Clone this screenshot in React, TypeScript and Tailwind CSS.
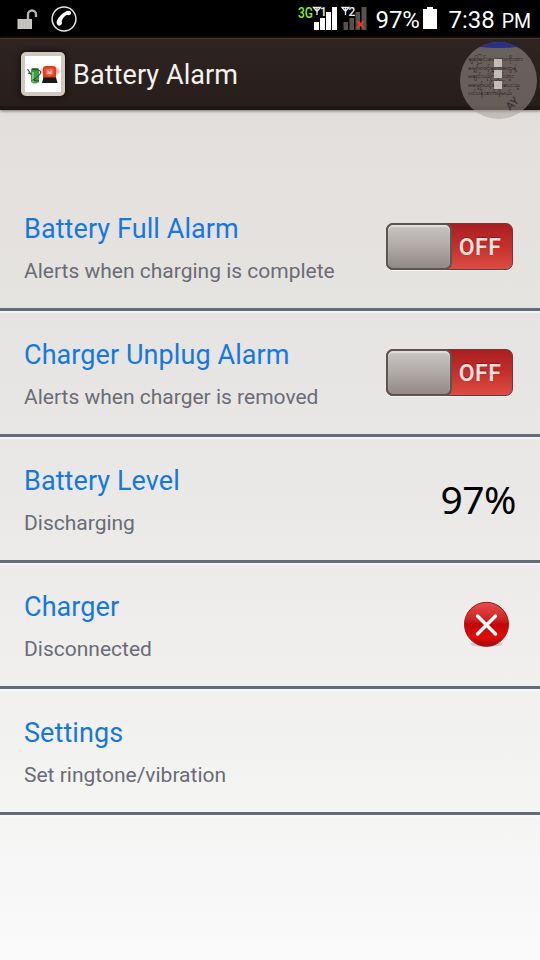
import React from "react";

interface RowProps {
  title: string;
  subtitle: string;
  children?: React.ReactNode;
}

function Row({ title, subtitle, children }: RowProps) {
  return (
    <div className="flex h-[126px] justify-between border-b-[3px] border-[#666b77] pr-[27px] pl-6 shadow-[0_2px_0_rgba(245,249,252,0.75)]">
      <div className="pt-7 whitespace-nowrap">
        <h2 className="text-[27px] leading-8 tracking-[0.08px] text-[#1678df]">{title}</h2>
        <p className="mt-[14px] text-[21px] leading-[25px] text-[#6a6c76]">
          {subtitle}
        </p>
      </div>
      {children}
    </div>
  );
}

function OffSwitch() {
  return (
    <button className="mt-[38px] flex h-[47px] w-[127px] rounded-[7px] border border-[#7c3433] bg-linear-to-b from-[#a91f20] via-[#c52f2d] to-[#dc4c44] shadow-[0_1px_0_#f8f6f4]">
      <span className="-mt-px -ml-px h-[47px] w-[66px] rounded-[7px] border-2 border-[#5b5451] bg-linear-to-b from-[#c9c5c3] via-[#b0aaa7] to-[#918a86] shadow-[inset_0_2px_1px_#e2dfdd]" />
      <span className="flex-1 pr-1 text-center text-[23px] leading-[47px] font-semibold tracking-[0.5px] text-[#f5dfda] [text-shadow:0_-1px_1px_#8c1a19]">
        OFF
      </span>
    </button>
  );
}

function UnlockIcon() {
  return (
    <svg width="21" height="21" viewBox="0 0 21 21">
      <path d="M11 11V5.500a4 4 0 0 1 8 0V8" fill="none" stroke="#b5b3b0" strokeWidth="2.400" />
      <rect x="0.500" y="10" width="14.500" height="10" fill="#c8c6c3" />
      <path d="M3 11v8M6 11v8M9 11v8M12 11v8" stroke="#b5b3b0" strokeWidth="0.700" />
    </svg>
  );
}

function PhoneIcon() {
  return (
    <svg width="26" height="26" viewBox="0 0 26 26">
      <circle cx="13" cy="13" r="11.900" fill="none" stroke="#e4e4e4" strokeWidth="1.500" />
      <path
        d="M14.500 5.700c1.500-1.500 4.600-1.400 5.500.4.700 1.600-.7 3.300-2.400 3.100-.8-.1-1.200-.5-2-.1-2 1.100-4.300 3.700-4.900 5.800-.2.800.4 1.200.3 2.100-.2 1.900-2.300 3.300-4 2.300-1.600-1-1.700-3.300-.8-5.200 1.700-3.500 5-6.900 8.300-8.400z"
        fill="#fff"
      />
    </svg>
  );
}

function SignalIcons() {
  return (
    <svg width="70" height="26" viewBox="0 0 70 26">
      <g fontFamily="Roboto, sans-serif" fontWeight="500">
        <text x="0" y="14" fill="#8eea2c" fontSize="14" textLength="15" lengthAdjust="spacingAndGlyphs">3G</text>
        <g fill="none" stroke="#eee" strokeWidth="1.300">
          <path d="M15.500 3.500h7l-3.500 4zM19 3v8" />
          <path d="M44 3.500h7l-3.500 4zM47.500 3v8" />
        </g>
        <text x="22" y="11.500" fill="#eee" fontSize="12">1</text>
        <path d="M16 18h5v8h-5zM22 14h5v12h-5zM28 8h5v18h-5zM34 3h5v23h-5z" fill="#fff" />
        <path d="M45.500 18h4.500v8h-4.500zM51.500 14h4.500v12h-4.500zM57.500 8h4.500v18h-4.500zM63.500 3h5v23h-5z" fill="#59504d" />
        <text x="50.500" y="11.500" fill="#eee" fontSize="12">2</text>
        <path d="m59 17 7 7m0-7-7 7" stroke="#e23a20" strokeWidth="1.900" />
      </g>
    </svg>
  );
}

function AppIcon() {
  return (
    <div className="flex h-11 w-11 items-center justify-center rounded-[5px] bg-[#d3c8bf] shadow-[0_0_4px_2px_#1a1411]">
      <svg className="h-9 w-9 bg-white" viewBox="0 0 36 36">
        <defs>
          <radialGradient id="glow">
            <stop offset="0.3" stopColor="#f03a20" stopOpacity="0.9" />
            <stop offset="1" stopColor="#f03a20" stopOpacity="0" />
          </radialGradient>
        </defs>
        <ellipse cx="25" cy="15" rx="11" ry="6" fill="url(#glow)" />
        <path d="M6 14q0-2 2-2h4q2 0 2 2v12q-4 3-8 0z" fill="#3d9f42" />
        <path d="M8 16v10" stroke="#91dc8e" strokeWidth="1.500" />
        <path d="M7 13.500h6" stroke="#176326" strokeWidth="1.500" />
        <path d="m2.500 13 4 6M3 17l3 1M13 14q4 1 2 4t-7 6l6 1" fill="none" stroke="#3d4b3f" strokeWidth="1.200" />
        <path d="M18 23v-10q0-3 3-3h7q3 0 3 3v10z" fill="#dc3e24" />
        <path d="M20.500 12.500h8v6l-4 2-4-2z" fill="#f0674b" />
        <path d="m22.500 14 2 2 2-2v4h-4z" fill="#ffc2aa" />
        <path d="m18.500 21.500h12.500l1.500 5.500H17z" fill="#1b1817" />
      </svg>
    </div>
  );
}

function ErrorIcon() {
  return (
    <svg className="mt-[37px] mr-px" width="50" height="50" viewBox="0 0 50 50">
      <defs>
        <linearGradient id="red" x2="0" y2="1">
          <stop offset="0" stopColor="#e5504d" />
          <stop offset="0.4" stopColor="#cf2020" />
          <stop offset="0.5" stopColor="#c20608" />
          <stop offset="0.8" stopColor="#e00b0c" />
          <stop offset="1" stopColor="#9b0909" />
        </linearGradient>
      </defs>
      <ellipse cx="24.500" cy="44" rx="16" ry="3" fill="#bdb5b1" opacity="0.6" />
      <circle cx="24.500" cy="24.300" r="22" fill="url(#red)" stroke="#a51414" />
      <path d="m15.500 16 18 18m0-18-18 18" stroke="#fff" strokeWidth="3.500" strokeLinecap="round" />
    </svg>
  );
}

// Floating chat-head bubble that sits over the overflow menu
function FloatingBubble() {
  return (
    <div className="absolute top-[42px] left-[460px] h-[77px] w-[77px] overflow-hidden rounded-full bg-[#a39d98]/50">
      <div className="absolute top-0 left-3 h-[6px] w-[53px] rounded-b-[50%] bg-[#293082]" />
      <div className="absolute top-[13px] left-2 flex flex-col text-[7px] leading-[8.500px] whitespace-nowrap text-[#14100e]">
        <p>ချစ်ခြင်းမေတ္တာကိုဘာ</p>
        <p>မျှော်လင့်ချက်တွေနဲ့</p>
        <p>မချင်းယုံကြည်ဘူး</p>
        <p>မမျှော်ပင့်စက်ပေးသူ</p>
        <p>ပင်ပန်းစက်မိ့မယ်</p>
      </div>
      <div className="absolute top-[17px] left-[34px] flex flex-col gap-[3px]">
        <span className="h-2 w-2 bg-[#d2cfcb]/85" />
        <span className="h-2 w-2 bg-[#d2cfcb]/85" />
        <span className="h-2 w-2 bg-[#d2cfcb]/85" />
      </div>
      <span className="absolute top-[56px] left-[46px] -rotate-45 text-[11px] leading-3 font-medium text-[#353335]">
        AY
      </span>
    </div>
  );
}

export default function App() {
  return (
    <div className="relative flex h-[960px] w-[540px] flex-col overflow-hidden bg-linear-to-b from-[#e0dcd9] via-[#e9e8e6] to-[#fafafa] font-[Roboto,sans-serif]">
      <div className="flex h-[38px] shrink-0 items-center bg-black text-white">
        <div className="flex items-center gap-[13px] pl-[17px]">
          <UnlockIcon />
          <PhoneIcon />
        </div>
        <div className="ml-auto flex items-center whitespace-nowrap">
          <div className="-mt-[5px]">
            <SignalIcons />
          </div>
          <span className="mt-[2px] ml-[7px] w-[47px] text-[24px] leading-none">97%</span>
          <svg className="-mt-[3px] ml-px" width="14" height="22" viewBox="0 0 14 22">
            <path d="M4 0h6v2h4v20H0V2h4z" fill="#fff" />
          </svg>
          <span className="mt-[2px] ml-[11px] text-[24px] leading-none">7:38</span>
          <span className="mt-[5px] mr-[9px] ml-[7px] text-[19.500px] leading-none">PM</span>
        </div>
      </div>

      <header className="flex h-[72px] shrink-0 items-center border-t border-b-4 border-t-[#403733] border-b-[#1e1613] bg-linear-to-b from-[#2e2522] to-[#271e1b] pt-[3px] pl-[21px] shadow-[0_1px_3px_#77706b]">
        <AppIcon />
        <h1 className="mt-px ml-2 text-[27px] leading-8 tracking-[0.080px] text-[#f5f1ee]">Battery Alarm</h1>
      </header>

      <main className="pt-[75px]">
        <Row title="Battery Full Alarm" subtitle="Alerts when charging is complete">
          <OffSwitch />
        </Row>
        <Row title="Charger Unplug Alarm" subtitle="Alerts when charger is removed">
          <OffSwitch />
        </Row>
        <Row title="Battery Level" subtitle="Discharging">
          <span className="-mr-[3px] pt-[38px] font-['Noto_Sans',sans-serif] text-[39px] leading-[48px] tracking-[-0.500px] text-black">
            97%
          </span>
        </Row>
        <Row title="Charger" subtitle="Disconnected">
          <ErrorIcon />
        </Row>
        <Row title="Settings" subtitle="Set ringtone/vibration" />
      </main>

      <FloatingBubble />
    </div>
  );
}
